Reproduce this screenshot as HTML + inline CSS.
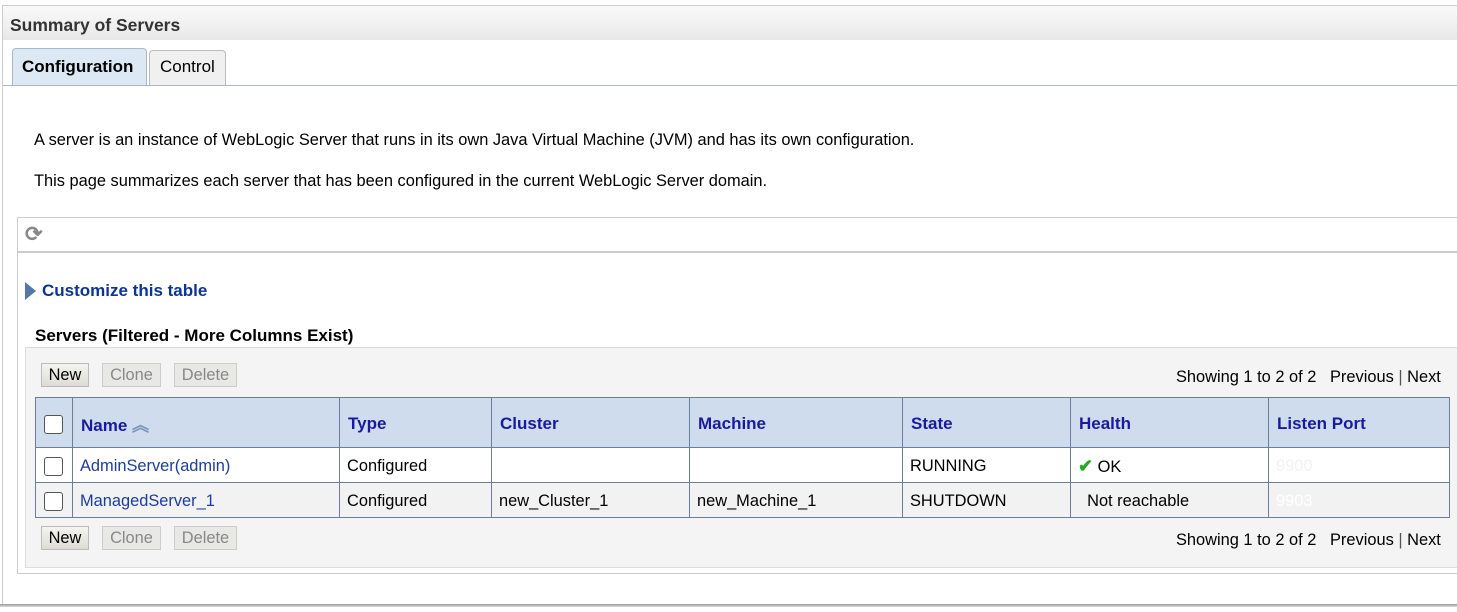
<!DOCTYPE html>
<html><head><style>
body{margin:0;width:1457px;height:612px;background:#fff;font-family:"Liberation Sans",sans-serif;font-size:16.4px;color:#000;position:relative;overflow:hidden}
.a{position:absolute}
.btn{position:absolute;height:22px;border:1px solid #bbb;background:linear-gradient(#f4f4f0,#dedcd4);font-size:16.4px;line-height:23px;text-align:center;color:#000}
.dis{color:#888;border-color:#ccc;background:#e8e8e4}
table{border-collapse:collapse;position:absolute;left:35px;top:397px;width:1415px;table-layout:fixed}
td{border:1px solid #6a7f9c;padding:2px 0 0 7px;font-size:16.4px;white-space:nowrap}
th{border:1px solid #6a7f9c;background:#cfdcee;color:#1a1aa0;text-align:left;padding:2px 0 0 8px;font-size:17px;height:47px}
.cb{display:inline-block;width:17px;height:17px;border:1px solid #555;border-radius:3px;background:#fff;vertical-align:middle}
a{color:#1a3da0;text-decoration:none}
</style></head><body>
<div class="a" style="left:2px;top:5px;width:1455px;height:600px;border-left:1px solid #ccc;border-top:1px solid #ccc"></div>
<div class="a" style="left:3px;top:6px;width:1454px;height:34px;background:linear-gradient(#fafafa,#e8e8e8)"></div>
<div class="a" style="left:10px;top:15px;font-weight:bold;font-size:17.5px;color:#333">Summary of Servers</div>
<div class="a" style="left:12px;top:48px;width:133px;height:37px;background:#dce8f3;border:1px solid #aab8c8;border-bottom:none;border-radius:4px 4px 0 0"></div>
<div class="a" style="left:22px;top:57px;font-weight:bold;font-size:17px">Configuration</div>
<div class="a" style="left:149px;top:50px;width:75px;height:35px;background:#f0f0f0;border:1px solid #bbb;border-bottom:none;border-radius:4px 4px 0 0"></div>
<div class="a" style="left:160px;top:57px;font-size:17px">Control</div>
<div class="a" style="left:3px;top:85px;width:1454px;height:1px;background:#a8b8cc"></div>
<div class="a" style="left:34px;top:131px">A server is an instance of WebLogic Server that runs in its own Java Virtual Machine (JVM) and has its own configuration.</div>
<div class="a" style="left:34px;top:172px">This page summarizes each server that has been configured in the current WebLogic Server domain.</div>
<div class="a" style="left:17px;top:217px;width:1440px;height:355px;border:1px solid #ccc;border-right:none"></div>
<div class="a" style="left:17px;top:251px;width:1440px;height:2px;background:#ccc"></div>
<div class="a" style="left:25px;top:222px;font-size:21px;color:#888;font-weight:bold">⟳</div>
<div class="a" style="left:25px;top:282px;width:0;height:0;border-left:11px solid #5577aa;border-top:9px solid transparent;border-bottom:9px solid transparent"></div>
<div class="a" style="left:42px;top:281px;font-weight:bold;font-size:17px;color:#0a3596">Customize this table</div>
<div class="a" style="left:35px;top:326px;font-weight:bold;font-size:17px">Servers (Filtered - More Columns Exist)</div>
<div class="a" style="left:25px;top:347px;width:1432px;height:219px;background:#f4f4f4;border:1px solid #ddd;border-right:none"></div>
<div class="btn" style="left:41px;top:363px;width:46px">New</div>
<div class="btn dis" style="left:102px;top:363px;width:57px">Clone</div>
<div class="btn dis" style="left:174px;top:363px;width:61px">Delete</div>
<div class="a" style="left:1176px;top:368px">Showing 1 to 2 of 2 &nbsp;&nbsp;Previous <span style="color:#555">|</span> Next</div>
<table>
<colgroup><col style="width:37px"><col style="width:267px"><col style="width:152px"><col style="width:198px"><col style="width:213px"><col style="width:168px"><col style="width:198px"><col></colgroup>
<tr><th style="padding-left:8px"><span class="cb"></span></th><th>Name <span style="color:#7b93b8">︽</span></th><th>Type</th><th>Cluster</th><th>Machine</th><th>State</th><th>Health</th><th>Listen Port</th></tr>
<tr style="background:#fff;height:35px"><td style="padding-left:8px"><span class="cb"></span></td><td><a>AdminServer(admin)</a></td><td>Configured</td><td></td><td></td><td>RUNNING</td><td><span style="color:#2a2;font-weight:bold;font-size:18px">✔</span> OK</td><td style="color:#f2f2f2">9900</td></tr>
<tr style="background:#f2f2f2;height:35px"><td style="padding-left:8px"><span class="cb"></span></td><td><a>ManagedServer_1</a></td><td>Configured</td><td>new_Cluster_1</td><td>new_Machine_1</td><td>SHUTDOWN</td><td>&nbsp;&nbsp;Not reachable</td><td style="color:#fff">9903</td></tr>
</table>
<div class="btn" style="left:41px;top:526px;width:46px">New</div>
<div class="btn dis" style="left:102px;top:526px;width:57px">Clone</div>
<div class="btn dis" style="left:174px;top:526px;width:61px">Delete</div>
<div class="a" style="left:1176px;top:531px">Showing 1 to 2 of 2 &nbsp;&nbsp;Previous <span style="color:#555">|</span> Next</div>
<div class="a" style="left:0;top:604px;width:1457px;height:3px;background:linear-gradient(#999,#ddd)"></div>
</body></html>
